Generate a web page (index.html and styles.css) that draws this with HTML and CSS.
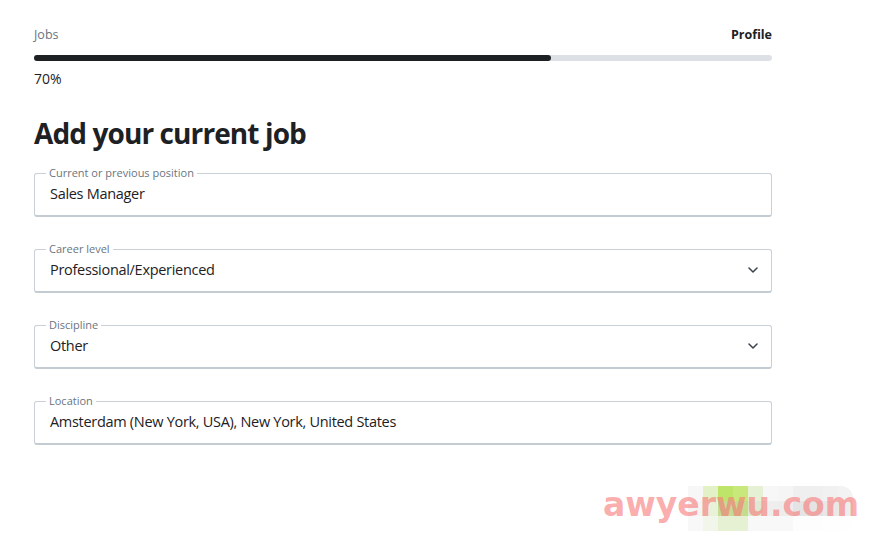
FILE: index.html
```html
<!DOCTYPE html>
<html lang="en">
<head>
    <meta charset="UTF-8">
    <meta name="viewport" content="width=device-width, initial-scale=1.0">
    <title>Add your current job</title>
    <link rel="stylesheet" href="styles.css">
</head>
<body>

    <div class="page">
        <div class="steps">
            <span class="step">Jobs</span>
            <span class="step current">Profile</span>
        </div>
        <div class="progress">
            <div class="progress-fill" style="width: 70%"></div>
        </div>
        <p class="percent">70%</p>

        <h1>Add your current job</h1>

        <fieldset class="field">
            <legend>Current or previous position</legend>
            <div class="value">Sales Manager</div>
        </fieldset>

        <fieldset class="field">
            <legend>Career level</legend>
            <div class="value">Professional/Experienced</div>
            <svg class="chevron" width="10" height="6" viewBox="0 0 10 6"><path d="M1 1 L5 5 L9 1" fill="none" stroke="#3a4148" stroke-width="1.5" stroke-linecap="round" stroke-linejoin="round"/></svg>
        </fieldset>

        <fieldset class="field">
            <legend>Discipline</legend>
            <div class="value">Other</div>
            <svg class="chevron" width="10" height="6" viewBox="0 0 10 6"><path d="M1 1 L5 5 L9 1" fill="none" stroke="#3a4148" stroke-width="1.5" stroke-linecap="round" stroke-linejoin="round"/></svg>
        </fieldset>

        <fieldset class="field">
            <legend>Location</legend>
            <div class="value">Amsterdam (New York, USA), New York, United States</div>
        </fieldset>

        <div class="footer">
            <div class="mosaic">
                <span style="background:#f7f7f7"></span><span style="background:#e2f2c6"></span><span style="background:#bfe46a"></span><span style="background:#c8e87c"></span><span style="background:#e5f0d4"></span><span style="background:#f7f7f7"></span><span style="background:#f5f5f5"></span><span style="background:#efefef"></span><span style="background:#efefef"></span><span style="background:#f1f1f1"></span><span style="background:#f3f3f3"></span>
                <span style="background:#f4f4f4"></span><span style="background:#e8f2d8"></span><span style="background:#c4dc94"></span><span style="background:#c3dc8e"></span><span style="background:#dfe8d2"></span><span style="background:#eeeeee"></span><span style="background:#ededed"></span><span style="background:#e4e4e4"></span><span style="background:#e4e4e4"></span><span style="background:#e8e8e8"></span><span style="background:#eeeeee"></span>
                <span style="background:#f8f8f8"></span><span style="background:#f2f6ea"></span><span style="background:#e6f0d2"></span><span style="background:#e6f0d2"></span><span style="background:#f8f8f8"></span><span style="background:#f8f8f8"></span><span style="background:#f8f8f8"></span><span style="background:#fdfdfd"></span><span style="background:#fdfdfd"></span><span style="background:#fefefe"></span><span style="background:#fefefe"></span>
            </div>
            <span class="watermark">awyerwu.com</span>
        </div>
    </div>

</body>
</html>
```

FILE: styles.css
```css
body {
    margin: 0;
    padding: 0;
    font-family: "Open Sans", "Noto Sans", sans-serif;
    background-color: #fff;
    color: #1d2124;
}

.page {
    width: 738px;
    padding: 27px 0 0 34px;
}

.steps {
    display: flex;
    justify-content: space-between;
    font-size: 12.5px;
    line-height: 16px;
    color: #6b7480;
}

.step.current {
    color: #1d2124;
    font-weight: 700;
}

.progress {
    margin-top: 12px;
    height: 6px;
    border-radius: 3px;
    background-color: #dde1e5;
}

.progress-fill {
    height: 100%;
    border-radius: 3px;
    background-color: #1d2124;
}

.percent {
    margin: 9px 0 0;
    font-size: 14px;
    line-height: 18px;
}

h1 {
    margin: 28px 0 0;
    font-size: 28px;
    line-height: 34px;
    font-weight: 700;
    letter-spacing: -0.9px;
}

.field {
    position: relative;
    margin: 17px 0 0;
    padding: 0 15px 11px;
    border: 1px solid #c9d0d7;
    border-bottom: 2px solid #c3cbd3;
    border-radius: 3px;
}

.field + .field {
    margin-top: 26px;
}

.field legend {
    padding: 0 3px;
    margin-left: -4px;
    font-size: 11px;
    line-height: 12px;
    color: #6b7480;
}

.value {
    font-size: 14.5px;
    line-height: 20px;
    margin-top: 5px;
    letter-spacing: -0.3px;
}

.chevron {
    position: absolute;
    right: 13px;
    top: 12px;
}

.footer {
    position: relative;
    height: 100px;
}

.mosaic {
    position: absolute;
    left: 654px;
    top: 41px;
    display: grid;
    grid-template-columns: repeat(11, 15px);
    grid-template-rows: repeat(3, 15px);
    border-radius: 0 12px 12px 0;
    overflow: hidden;
}

.watermark {
    position: absolute;
    left: 569px;
    top: 40px;
    font-family: "DejaVu Sans", sans-serif;
    font-size: 33px;
    line-height: 40px;
    font-weight: 700;
    letter-spacing: 0;
    color: rgba(248, 120, 120, 0.62);
}
```
